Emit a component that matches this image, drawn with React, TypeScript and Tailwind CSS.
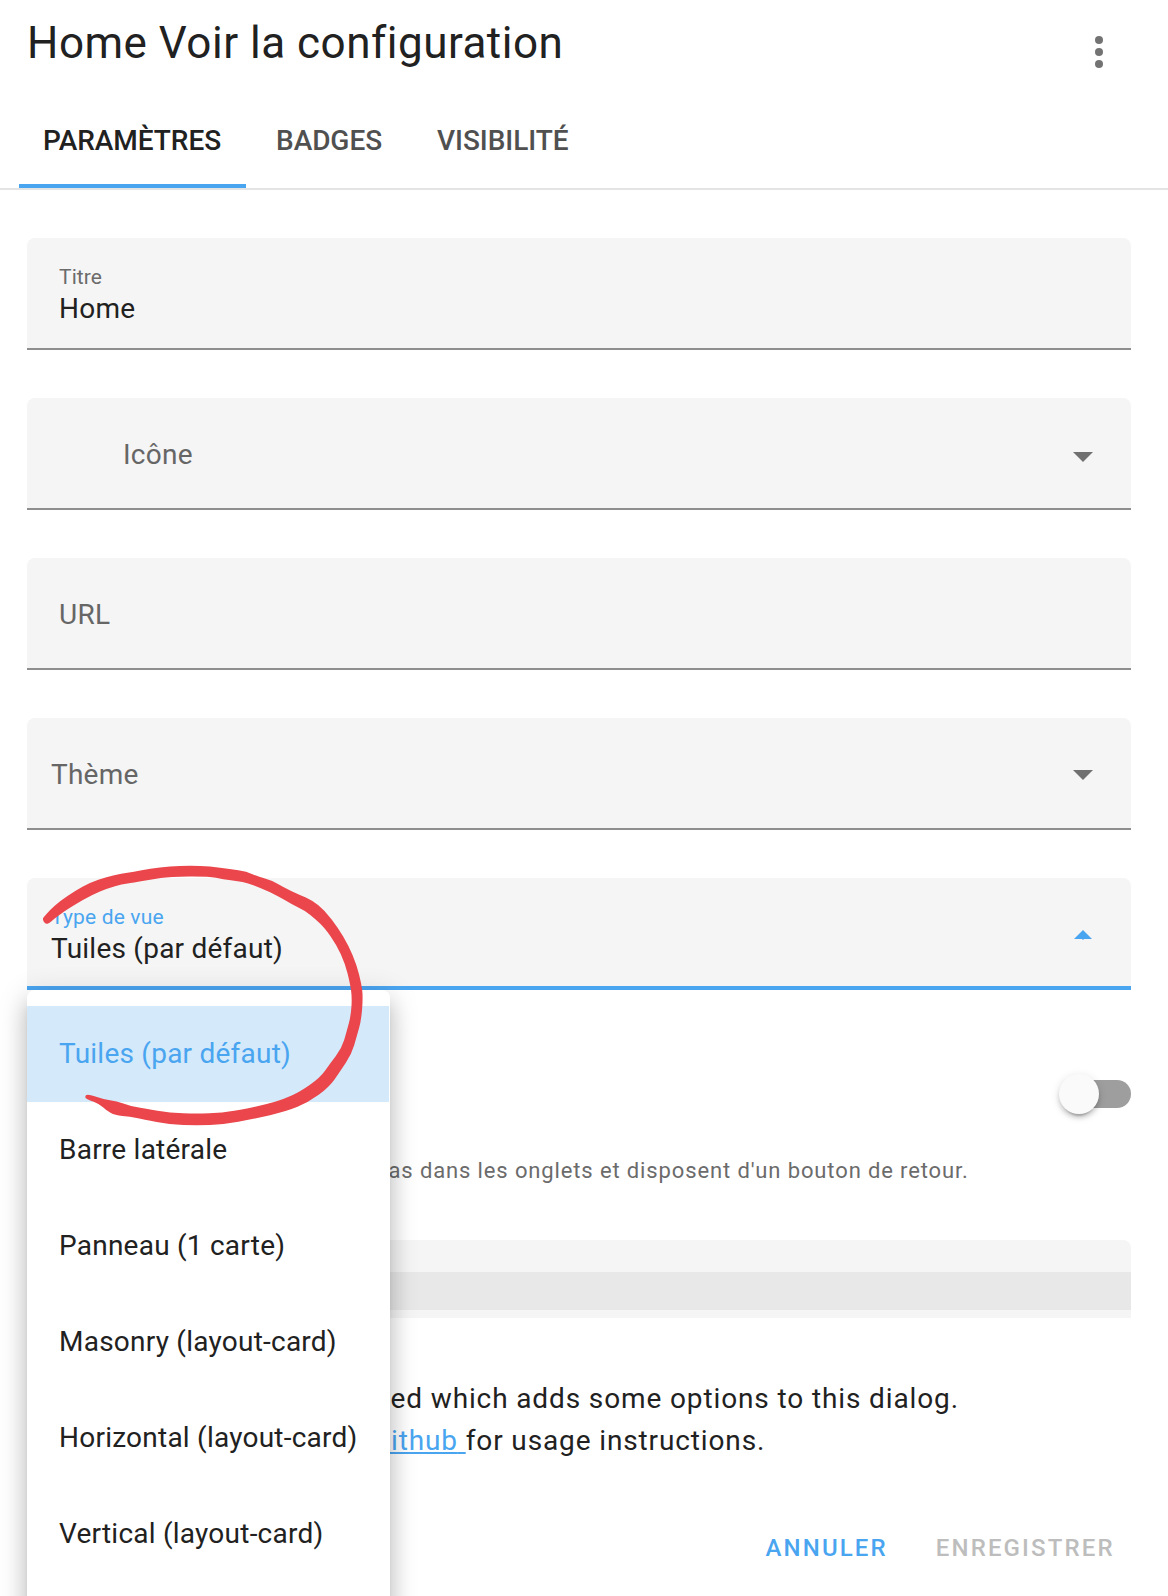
import type { ReactNode } from "react";

const VIEW_TYPES = [
  "Tuiles (par défaut)",
  "Barre latérale",
  "Panneau (1 carte)",
  "Masonry (layout-card)",
  "Horizontal (layout-card)",
  "Vertical (layout-card)",
];

function ArrowDown() {
  return (
    <svg className="h-[10px] w-5" viewBox="0 0 20 10" fill="#707070">
      <path d="M0 0h20L10 10z" />
    </svg>
  );
}

function ArrowUp() {
  return (
    <svg className="mt-1.5 h-[10px] w-5" viewBox="0 0 20 10" fill="#4aa5f0">
      <path d="M10 0l9 9H1z" />
      <path d="M9 9h2v0.5H9z" />
    </svg>
  );
}

function Field({ children, arrow }: { children: ReactNode; arrow?: ReactNode }) {
  return (
    <div className="flex h-28 items-center justify-between rounded-t-lg border-b-2 border-[#8e8e8e] bg-[#f5f5f5] pt-1 pr-[38px]">
      {children}
      {arrow}
    </div>
  );
}

function ViewTypeMenu() {
  return (
    <ul className="absolute top-full left-0 z-10 h-[760px] w-[363px] rounded-lg bg-white py-4 shadow-[0_10px_10px_-6px_rgba(0,0,0,0.2),0_16px_20px_2px_rgba(0,0,0,0.14),0_6px_28px_4px_rgba(0,0,0,0.12)]">
      {VIEW_TYPES.map((name, i) => (
        <li
          key={name}
          className={
            i === 0
              ? "mr-px flex h-24 items-center bg-[#d4e9fa] pl-8 text-[#4aa5f0]"
              : "flex h-24 items-center pl-8"
          }
        >
          {name}
        </li>
      ))}
    </ul>
  );
}

const MARKER_OUTLINE: [number, number][] = [
  [127, 207], [133, 199], [150, 180], [180, 153], [225, 123], [270, 98], [320, 81], [365, 71],
  [400, 66], [450, 56], [510, 49], [570, 47], [630, 49], [690, 57], [740, 65], [775, 80],
  [815, 91], [850, 112], [900, 135], [935, 150], [975, 182], [1015, 235], [1045, 285],
  [1070, 345], [1084, 400], [1089, 440], [1084, 510], [1070, 560], [1055, 612], [1020, 665],
  [987, 712], [925, 757], [860, 784], [760, 807], [670, 824], [590, 826], [510, 824],
  [430, 808], [390, 800], [345, 796], [318, 781], [300, 763], [262, 748], [254, 741], [262, 731],
  [310, 748], [350, 753], [390, 768], [435, 776], [510, 789], [590, 791], [665, 789],
  [750, 774], [800, 762], [850, 748], [900, 725], [960, 683], [990, 641], [1025, 595],
  [1040, 545], [1053, 495], [1056, 440], [1050, 400], [1035, 340], [1010, 285], [975, 235],
  [945, 206], [915, 182], [875, 163], [820, 130], [780, 114], [740, 98], [715, 94], [670, 88],
  [625, 79], [510, 80], [455, 88], [400, 98], [365, 103], [325, 114], [275, 135], [225, 164],
  [190, 186], [160, 209], [149, 219], [136, 223],
];

function smoothOutline(points: [number, number][]) {
  const mid = (a: [number, number], b: [number, number]) =>
    `${(a[0] + b[0]) / 2} ${(a[1] + b[1]) / 2}`;
  const start = mid(points[points.length - 1], points[0]);
  const curves = points.map(
    (p, i) => `Q${p[0]} ${p[1]} ${mid(p, points[(i + 1) % points.length])}`,
  );
  return `M${start}${curves.join("")}Z`;
}

function MarkerCircle() {
  return (
    <svg
      className="pointer-events-none absolute -top-7 -left-[27px] z-20 h-[300px] w-[420px]"
      viewBox="0 0 1260 900"
      fill="#ea464b"
    >
      <path d={smoothOutline(MARKER_OUTLINE)} />
    </svg>
  );
}

export default function App() {
  return (
    <div className="relative flex h-[1596px] w-[1168px] flex-col overflow-hidden bg-white font-[Roboto,sans-serif] text-[28px] leading-7 tracking-[0.235px] text-[#212121]">
      <header className="flex h-[190px] flex-col justify-between border-b-2 border-[#e4e4e4]">
        <div className="flex justify-between pt-[17px] pr-[65px] pl-[27px]">
          <h1 className="text-[44px] leading-[52px] tracking-[0.5px]">Home Voir la configuration</h1>
          <svg className="mt-[19px] h-8 w-2" viewBox="0 0 8 32" fill="#737373">
            <circle cx="4" cy="4" r="4" />
            <circle cx="4" cy="16" r="4" />
            <circle cx="4" cy="28" r="4" />
          </svg>
        </div>
        <nav className="flex h-[94px] pl-[19px] font-medium tracking-[-0.05px] text-[#505050]">
          <div className="w-[227px] border-b-4 border-[#4aa5f0] pt-[33px] pl-6 text-[#212121]">
            PARAMÈTRES
          </div>
          <div className="ml-[30px] w-[161px] pt-[33px]">BADGES</div>
          <div className="pt-[33px]">VISIBILITÉ</div>
        </nav>
      </header>

      <main className="flex flex-col gap-12 pt-12 pr-[37px] pl-[27px]">
        <Field>
          <div className="pb-0.5 pl-8">
            <div className="text-[21px] leading-6 tracking-[0.1px] text-[#6b6b6b]">Titre</div>
            <div className="mt-1.5">Home</div>
          </div>
        </Field>
        <Field
          arrow={
            <div className="pt-1">
              <ArrowDown />
            </div>
          }
        >
          <span className="pl-24 text-[#666]">Icône</span>
        </Field>
        <Field>
          <span className="pl-8 text-[#666]">URL</span>
        </Field>
        <Field arrow={<ArrowDown />}>
          <span className="pl-6 text-[#666]">Thème</span>
        </Field>

        <div className="relative h-28">
          <div className="flex h-28 items-center justify-between rounded-t-lg border-b-4 border-[#4aa5f0] bg-[#f5f5f5] pr-[38px] pl-6">
            <div className="pt-[3px]">
              <div className="text-[21px] leading-6 tracking-[0.16px] text-[#4aa5f0]">
                Type de vue
              </div>
              <div className="mt-1.5">Tuiles (par défaut)</div>
            </div>
            <ArrowUp />
          </div>
          <ViewTypeMenu />
          <MarkerCircle />
        </div>
      </main>

      <section className="flex flex-col pr-[37px] pl-[390px]">
        <div className="mt-[84px] flex h-10 justify-end">
          <div className="flex w-[72px] items-center">
            <div className="z-[1] size-10 shrink-0 rounded-full bg-[#fafafa] shadow-[0_6px_2px_-4px_rgba(0,0,0,0.2),0_4px_4px_rgba(0,0,0,0.14),0_2px_10px_rgba(0,0,0,0.12)]" />
            <div className="-ml-8 h-7 w-16 rounded-full bg-[#9e9e9e]" />
          </div>
        </div>
        <p className="mt-[43px] -ml-[1.5px] text-[22px] tracking-[0.87px] whitespace-nowrap text-[#6b6b6b]">
          as dans les onglets et disposent d'un bouton de retour.
        </p>
        <div className="mt-[55px] -ml-4 h-[78px] rounded-t-lg bg-[#f5f5f5] pt-8">
          <div className="h-[38px] bg-[#e8e8e8]" />
        </div>
        <p className="mt-[60px] pl-[0.5px] leading-[42px] tracking-[0.875px] whitespace-nowrap">
          ed which adds some options to this dialog.
          <br />
          <a className="-ml-[19.5px] text-[#4aa5f0] underline decoration-2 underline-offset-2">
            Github{" "}
          </a>
          for usage instructions.
        </p>
      </section>

      <footer className="mt-[72px] flex gap-12 pl-[765.5px] text-2xl leading-7 font-medium tracking-[2.14px]">
        <span className="text-[#4aa5f0]">ANNULER</span>
        <span className="text-[#bdbdbd]">ENREGISTRER</span>
      </footer>
    </div>
  );
}
